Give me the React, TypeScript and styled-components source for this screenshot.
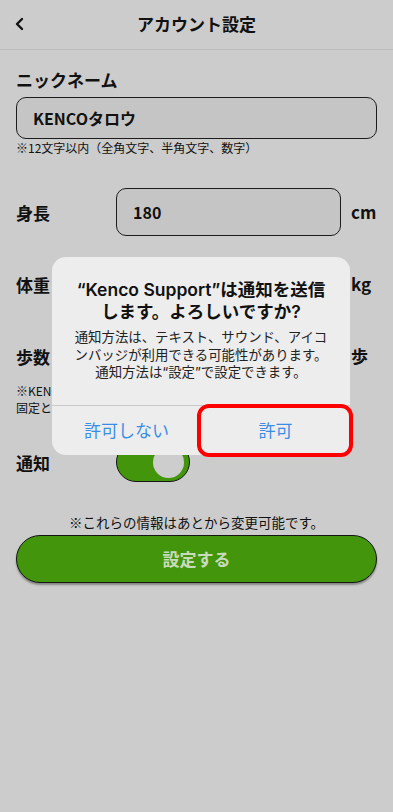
import React from "react";
import styled, { createGlobalStyle } from "styled-components";

const Global = createGlobalStyle`
  html, body { margin: 0; padding: 0; background: #cccccc; }
  body {
    font-family: "Noto Sans CJK JP", "Noto Sans", sans-serif;
    color: #111;
    -webkit-font-smoothing: antialiased;
  }
  * { box-sizing: border-box; }
`;

const Screen = styled.div`
  position: relative;
  width: 393px;
  height: 812px;
  background: #cccccc;
  overflow: hidden;
`;

const Header = styled.header`
  height: 50px;
  display: grid;
  grid-template-columns: 40px 1fr 40px;
  align-items: center;
  border-bottom: 1px solid #bcbcbc;
`;

const Back = styled.div`
  display: flex;
  align-items: center;
  justify-content: flex-start;
  padding-left: 14px;
  padding-bottom: 1px;
`;

const Title = styled.h1`
  margin: 0;
  text-align: center;
  font-size: 17px;
  font-weight: 700;
  line-height: 24px;
  padding-bottom: 1px;
`;

const Body = styled.main`
  padding: 18px 16px 0;
  display: flex;
  flex-direction: column;
`;

const Label = styled.div`
  font-size: 17px;
  font-weight: 700;
  line-height: 24px;
`;

const Field = styled.div<{ $h: number; $mt?: number }>`
  height: ${(p) => p.$h}px;
  margin-top: ${(p) => p.$mt ?? 0}px;
  border: 1px solid #1c1c1c;
  border-radius: 10px;
  background: #c5c5c5;
  display: flex;
  align-items: center;
  padding-left: 16px;
  font-size: 16px;
  font-weight: 700;
`;

const Note = styled.div<{ $mt?: number }>`
  margin-top: ${(p) => p.$mt ?? 0}px;
  font-size: 12px;
  line-height: 17px;
  color: #111;
`;

const Rows = styled.div`
  margin-top: 32px;
  display: flex;
  flex-direction: column;
  gap: 24px;
`;

const Row = styled.div<{ $mt?: number }>`
  display: grid;
  grid-template-columns: 100px 1fr 36px;
  align-items: center;
  margin-top: ${(p) => p.$mt ?? 0}px;
`;

const RowLabel = styled.div`
  font-size: 17px;
  font-weight: 700;
`;

const Unit = styled.div`
  font-size: 17px;
  font-weight: 700;
  padding-left: 10px;
  padding-bottom: 2px;
`;

const Toggle = styled.div<{ $on: boolean }>`
  width: 74px;
  height: 40px;
  border-radius: 20px;
  border: 1px solid #151515;
  background: ${(p) => (p.$on ? "#43960c" : "#bbb")};
  display: flex;
  align-items: center;
  justify-content: ${(p) => (p.$on ? "flex-end" : "flex-start")};
  padding: 0 5px;
`;

const Knob = styled.div`
  width: 31px;
  height: 31px;
  border-radius: 50%;
  background: #cdcdcd;
`;

const Footer = styled.div`
  margin-top: 31px;
  text-align: center;
  font-size: 13.5px;
  line-height: 18px;
`;

const Submit = styled.button`
  margin-top: 4px;
  height: 48px;
  width: 100%;
  border-radius: 24px;
  border: 1px solid #151515;
  background: #43960c;
  color: #c9dbbd;
  font-family: inherit;
  font-size: 17px;
  font-weight: 700;
  box-shadow: 0 2px 2px rgba(0, 0, 0, 0.35);
  padding: 0 0 2px;
`;

const Overlay = styled.div`
  position: absolute;
  inset: 0;
`;

const Alert = styled.div`
  position: absolute;
  top: 257px;
  left: 52px;
  width: 298px;
  border-radius: 14px;
  background: #ededed;
  font-family: Inter, "Noto Sans CJK JP", sans-serif;
  text-align: center;
  overflow: hidden;
`;

const AlertBody = styled.div`
  padding: 22px 20px 23px;
  border-bottom: 1px solid #c9c9c9;
`;

const AlertTitle = styled.div`
  font-size: 17.5px;
  font-weight: 600;
  line-height: 22px;
  color: #111;
`;

const AlertMsg = styled.div`
  margin-top: 6px;
  font-size: 13.4px;
  line-height: 17.5px;
  color: #222;
`;

const AlertActions = styled.div`
  display: grid;
  grid-template-columns: 1fr 1fr;
  height: 49px;
`;

const AlertBtn = styled.div`
  display: flex;
  align-items: center;
  justify-content: center;
  font-family: "Noto Sans CJK JP", sans-serif;
  font-size: 17px;
  color: #3a8de6;
  padding-bottom: 1px;
`;

const Highlight = styled.div`
  position: absolute;
  left: 197px;
  top: 404px;
  width: 156px;
  height: 53px;
  border: 4.5px solid #ff0000;
  border-radius: 12px;
`;

export default function App() {
  return (
    <>
      <Global />
      <Screen>
        <Header>
          <Back>
            <svg width="12" height="14" viewBox="0 0 12 14">
              <polyline
                points="8,2 3,7 8,12"
                fill="none"
                stroke="#111"
                strokeWidth="2.4"
                strokeLinecap="round"
                strokeLinejoin="round"
              />
            </svg>
          </Back>
          <Title>アカウント設定</Title>
          <div />
        </Header>
        <Body>
          <Label>ニックネーム</Label>
          <Field $h={42} $mt={5}>KENCOタロウ</Field>
          <Note>※12文字以内（全角文字、半角文字、数字）</Note>
          <Rows>
            <Row>
              <RowLabel>身長</RowLabel>
              <Field $h={48}>180</Field>
              <Unit>cm</Unit>
            </Row>
            <Row>
              <RowLabel>体重</RowLabel>
              <Field $h={48}>75</Field>
              <Unit>kg</Unit>
            </Row>
            <Row>
              <RowLabel>歩数</RowLabel>
              <Field $h={48}>8000</Field>
              <Unit>歩</Unit>
            </Row>
          </Rows>
          <Note $mt={2}>
            ※KENCOアプリの目標歩数は8,000歩で
            <br />
            固定となります。
          </Note>
          <Row $mt={26}>
            <RowLabel>通知</RowLabel>
            <div>
              <Toggle $on>
                <Knob />
              </Toggle>
            </div>
            <div />
          </Row>
          <Footer>※これらの情報はあとから変更可能です。</Footer>
          <Submit>設定する</Submit>
        </Body>
        <Overlay>
          <Alert>
            <AlertBody>
              <AlertTitle>
                “Kenco Support”は通知を送信
                <br />
                します。よろしいですか?
              </AlertTitle>
              <AlertMsg>
                通知方法は、テキスト、サウンド、アイコ
                <br />
                ンバッジが利用できる可能性があります。
                <br />
                通知方法は“設定”で設定できます。
              </AlertMsg>
            </AlertBody>
            <AlertActions>
              <AlertBtn>許可しない</AlertBtn>
              <AlertBtn>許可</AlertBtn>
            </AlertActions>
          </Alert>
          <Highlight />
        </Overlay>
      </Screen>
    </>
  );
}
